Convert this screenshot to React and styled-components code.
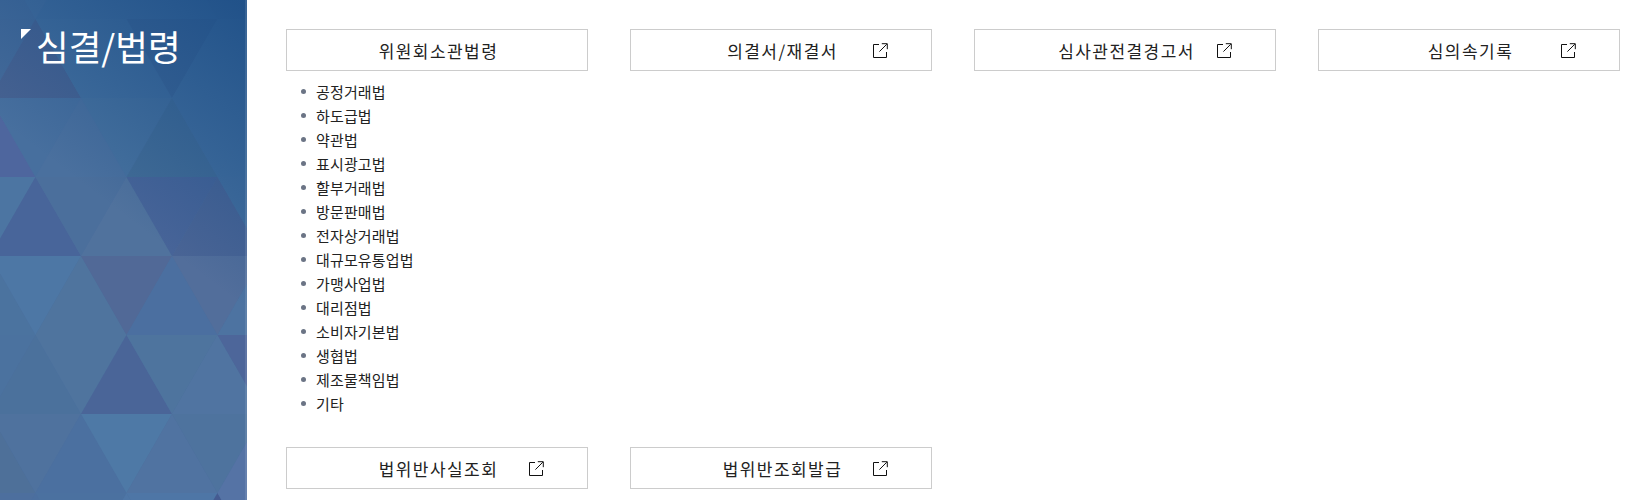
import React from 'react';
import styled, { createGlobalStyle } from 'styled-components';

const Global = createGlobalStyle`
  html, body { margin: 0; padding: 0; background: #fff; }
  body { font-family: "Noto Sans CJK KR", "Noto Sans", sans-serif; color: #222; }
`;

const Page = styled.div`
  display: flex;
  width: 1629px;
  height: 500px;
  overflow: hidden;
`;

const Sidebar = styled.aside`
  position: relative;
  flex: 0 0 247px;
  height: 500px;
  overflow: hidden;
  background: #4b6f9e;
  &::after {
    content: '';
    position: absolute;
    top: 0;
    right: 0;
    bottom: 0;
    width: 2px;
    background: rgba(255, 255, 255, 0.1);
  }
`;

const Pattern = styled.svg`
  position: absolute;
  inset: 0;
  display: block;
`;

const Title = styled.h1`
  position: relative;
  margin: 0;
  padding: 20px 0 0 36px;
  font-size: 35.5px;
  line-height: 52px;
  font-weight: 400;
  color: #fff;
  &::before {
    content: '';
    position: absolute;
    left: 21px;
    top: 29px;
    width: 0;
    height: 0;
    border-style: solid;
    border-width: 10px 10px 0 0;
    border-color: #fff transparent transparent transparent;
  }
`;

const Main = styled.main`
  flex: 1;
  display: grid;
  grid-template-columns: repeat(4, 302px);
  column-gap: 42px;
  row-gap: 32px;
  align-content: start;
  padding: 29px 0 0 39px;
`;

const Column = styled.div`
  display: flex;
  flex-direction: column;
`;

const Button = styled.a`
  position: relative;
  box-sizing: border-box;
  display: flex;
  align-items: center;
  justify-content: center;
  height: 42px;
  padding-left: 3px;
  border: 1px solid #ccc;
  background: #fff;
  color: #222;
  font-size: 17px;
  letter-spacing: 1.45px;
  text-decoration: none;
`;

const ExternalIcon = styled.svg`
  position: absolute;
  right: 43px;
  top: 13px;
  width: 15px;
  height: 15px;
  fill: none;
  stroke: #111;
  stroke-width: 1;
`;

const LawList = styled.ul`
  list-style: none;
  margin: 8px 0 0;
  padding: 0 0 0 15px;
`;

const LawItem = styled.li`
  display: flex;
  align-items: center;
  gap: 10px;
  height: 24px;
  font-size: 15px;
  letter-spacing: 0.15px;
  color: #222;
  &::before {
    content: '';
    flex: 0 0 5px;
    height: 5px;
    border-radius: 50%;
    background: #6b7485;
  }
`;

const rows = [
  ['#456c9b', '#44709f', '#406d9d', '#406d9d', '#406d9d', '#3f6b9b', '#3f6b9b'],
  ['#456b9a', '#47608f', '#42709e', '#42709e', '#3c6595', '#42709e', '#42709e'],
  ['#4f659f', '#476f9e', '#4a719f', '#46729f', '#416c95', '#42709e', '#42709e'],
  ['#4d77a3', '#48649a', '#4c6f9c', '#52739d', '#476397', '#496394', '#43709e'],
  ['#4c74a0', '#4e79a7', '#50769f', '#536896', '#4b70a1', '#546e9b', '#4e74a2'],
  ['#4c73a0', '#4c729c', '#50759f', '#4a6498', '#4f759f', '#5276a2', '#4e659a'],
  ['#4f7199', '#50739f', '#4c71a1', '#4f7ba8', '#5274a2', '#4f749f', '#5774a7'],
  ['#4e6f9e', '#4c6fa0', '#4c72a1', '#4f78a8', '#4f78a8', '#44588f', '#5774a7'],
];

const triangles = rows.flatMap((colors, r) => {
  const top = -60 + 79 * r;
  const bottom = top + 79;
  return colors.map((fill, i) => {
    const c = -10 + 45.5 * i;
    const up = r % 2 === 0 ? i % 2 === 0 : i % 2 === 1;
    const points = up
      ? `${c},${top} ${c - 45.5},${bottom} ${c + 45.5},${bottom}`
      : `${c},${bottom} ${c - 45.5},${top} ${c + 45.5},${top}`;
    return { key: `${r}-${i}`, fill, points };
  });
});

const SidePattern = () => (
  <Pattern width="247" height="500" viewBox="0 0 247 500" aria-hidden="true">
    <defs>
      <linearGradient id="shade" gradientUnits="userSpaceOnUse" x1="235" y1="0" x2="90" y2="190">
        <stop offset="0" stopColor="#1a4c85" stopOpacity="0.8" />
        <stop offset="1" stopColor="#1a4c85" stopOpacity="0" />
      </linearGradient>
    </defs>
    <g opacity="0.85">
      {triangles.map(t => (
        <polygon key={t.key} points={t.points} fill={t.fill} />
      ))}
    </g>
    <rect width="247" height="500" fill="url(#shade)" />
  </Pattern>
);

const External = () => (
  <ExternalIcon viewBox="0 0 15 15" aria-hidden="true">
    <path d="M6 1.5H.5v13h13V9" />
    <path d="M6.4 8.6 13.8 1.2M8.8.7h5.5v5.5" />
  </ExternalIcon>
);

const laws = ['공정거래법', '하도급법', '약관법', '표시광고법', '할부거래법', '방문판매법', '전자상거래법', '대규모유통업법', '가맹사업법', '대리점법', '소비자기본법', '생협법', '제조물책임법', '기타'];

const LinkButton = ({ children, external = true }) => (
  <Button href="#">
    {children}
    {external && <External />}
  </Button>
);

export default function App() {
  return (
    <Page>
      <Global />
      <Sidebar>
        <SidePattern />
        <Title>심결/법령</Title>
      </Sidebar>
      <Main>
        <Column>
          <LinkButton external={false}>위원회소관법령</LinkButton>
          <LawList>
            {laws.map(l => <LawItem key={l}>{l}</LawItem>)}
          </LawList>
        </Column>
        <Column><LinkButton>의결서/재결서</LinkButton></Column>
        <Column><LinkButton>심사관전결경고서</LinkButton></Column>
        <Column><LinkButton>심의속기록</LinkButton></Column>
        <Column><LinkButton>법위반사실조회</LinkButton></Column>
        <Column><LinkButton>법위반조회발급</LinkButton></Column>
      </Main>
    </Page>
  );
}
